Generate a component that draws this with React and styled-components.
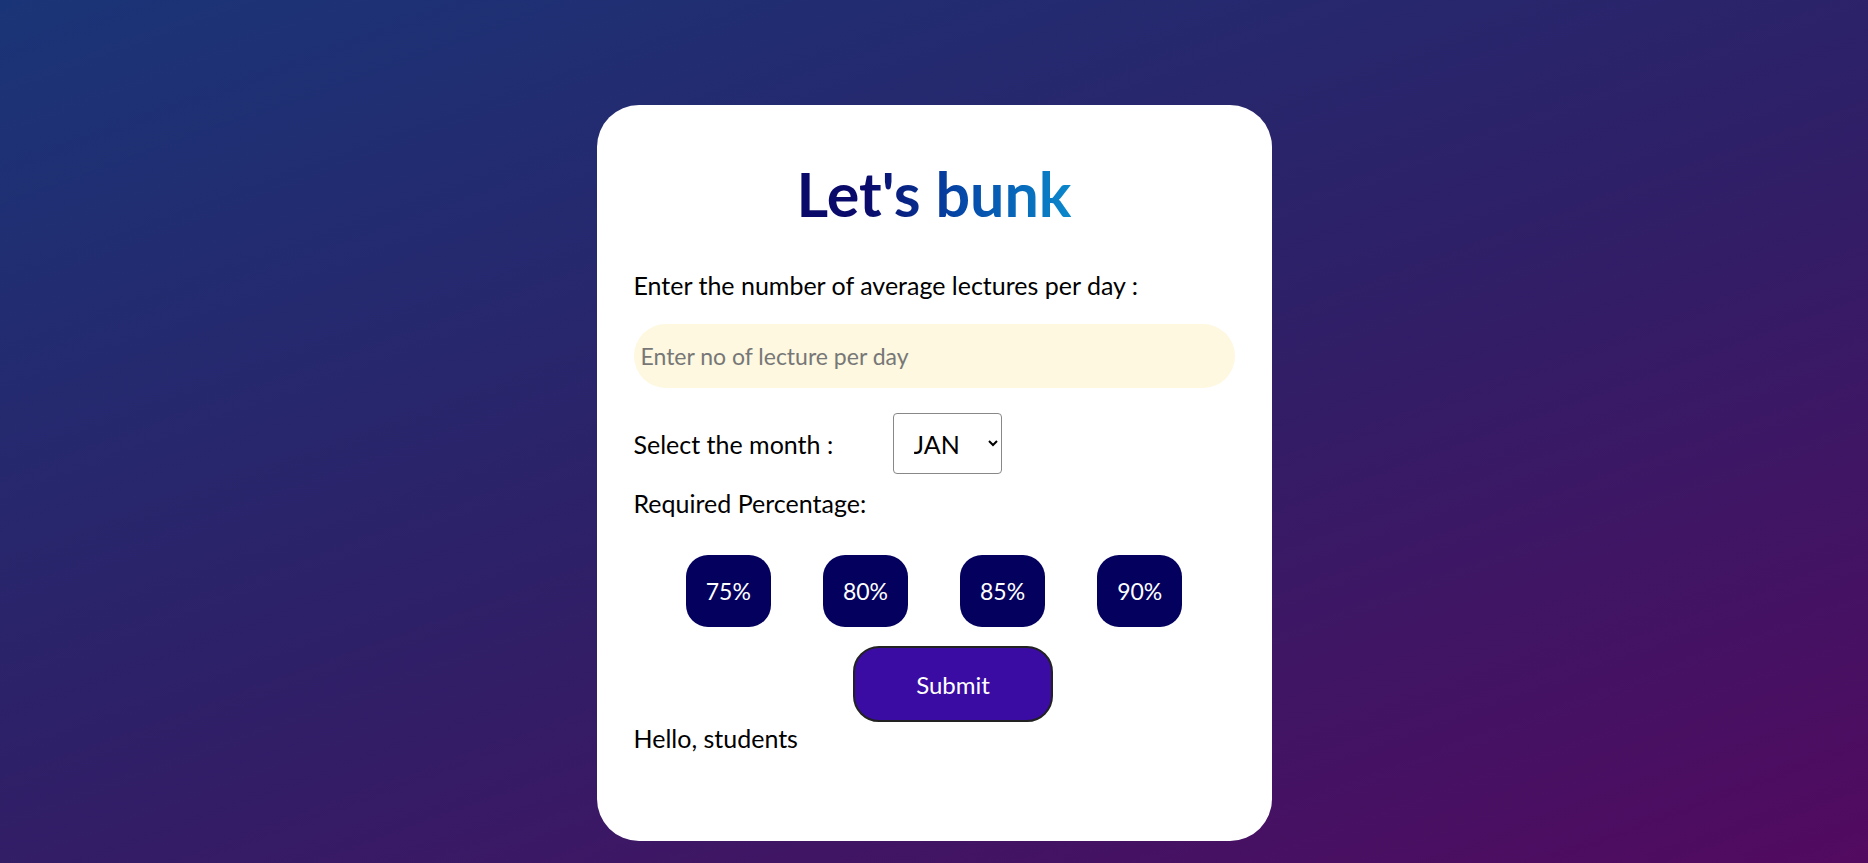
import styled, { createGlobalStyle } from "styled-components";

const GlobalStyle = createGlobalStyle`
  html, body {
    margin: 0;
    padding: 0;
  }
  body {
    font-family: Lato, "Open Sans", sans-serif;
  }
`;

function App() {
  const percents = ["75%", "80%", "85%", "90%"];
  return (
    <Page>
      <GlobalStyle />
      <Card>
        <Title>Let's bunk</Title>
        <Label $top={41}>Enter the number of average lectures per day :</Label>
        <Input type="number" placeholder="Enter no of lecture per day" />
        <MonthRow>
          <RowLabel>Select the month :</RowLabel>
          <Select defaultValue="JAN">
            <option>JAN</option>
            <option>FEB</option>
            <option>MAR</option>
          </Select>
        </MonthRow>
        <Label $top={14}>Required Percentage:</Label>
        <PercentRow>
          {percents.map((p) => (
            <PercentBtn key={p}>{p}</PercentBtn>
          ))}
        </PercentRow>
        <SubmitRow>
          <Submit>Submit</Submit>
        </SubmitRow>
        <Label $top={1}>Hello, students</Label>
      </Card>
    </Page>
  );
}

export default App;

const Page = styled.div`
  width: 100vw;
  height: 100vh;
  overflow: hidden;

  display: flex;
  justify-content: center;
  align-items: flex-start;

  background-image: linear-gradient(160deg, #1a3577, #2e2068 50%, #520a60);
`;

const Card = styled.div`
  background-color: white;

  width: 675px;
  height: 736px;
  margin-top: 105px;
  padding: 0 37px;
  box-sizing: border-box;

  border-radius: 42px;

  display: flex;
  flex-direction: column;
`;

const Title = styled.h1`
  margin: 54px 0 0;

  font-size: 61px;
  font-weight: 700;
  line-height: 70px;
  text-align: center;

  background-image: linear-gradient(90deg, #0a0a6a 25%, #0548a8 60%, #0a88cc);
  background-clip: text;
  -webkit-background-clip: text;
  color: transparent;
  width: fit-content;
  align-self: center;
`;

const Label = styled.div`
  font-size: 25px;
  line-height: 30px;
  color: black;
  margin-top: ${(p) => p.$top}px;
`;

const RowLabel = styled.div`
  font-size: 25px;
  line-height: 30px;
  width: 259px;
`;

const Input = styled.input`
  margin-top: 24px;
  height: 64px;
  width: 100%;
  box-sizing: border-box;

  border: none;
  outline: none;
  border-radius: 32px;
  background-color: #fdf8df;

  padding: 0 7px;
  font-family: inherit;
  font-size: 23px;

  &::placeholder {
    color: #777;
  }
`;

const MonthRow = styled.div`
  margin-top: 25px;

  display: flex;
  align-items: center;
`;

const Select = styled.select`
  width: 109px;
  height: 61px;

  font-family: inherit;
  font-size: 25px;
  padding: 0 8px 0 16px;

  color: black;
  background: white;
  border: 1px solid #888;
  border-radius: 4px;
`;

const PercentRow = styled.div`
  margin-top: 37px;

  display: flex;
  justify-content: center;
  gap: 52px;
`;

const PercentBtn = styled.button`
  background-color: #03005e;
  color: white;

  height: 72px;
  padding: 0 20px;

  border: none;
  border-radius: 22px;

  font-family: inherit;
  font-size: 23px;
  cursor: pointer;
`;

const SubmitRow = styled.div`
  margin-top: 19px;
  padding-left: 38px;

  display: flex;
  justify-content: center;
`;

const Submit = styled.button`
  background-color: #3a0ca3;
  color: white;

  width: 200px;
  height: 76px;

  border: 2px solid #222;
  border-radius: 26px;

  font-family: inherit;
  font-size: 24px;
  cursor: pointer;
`;
